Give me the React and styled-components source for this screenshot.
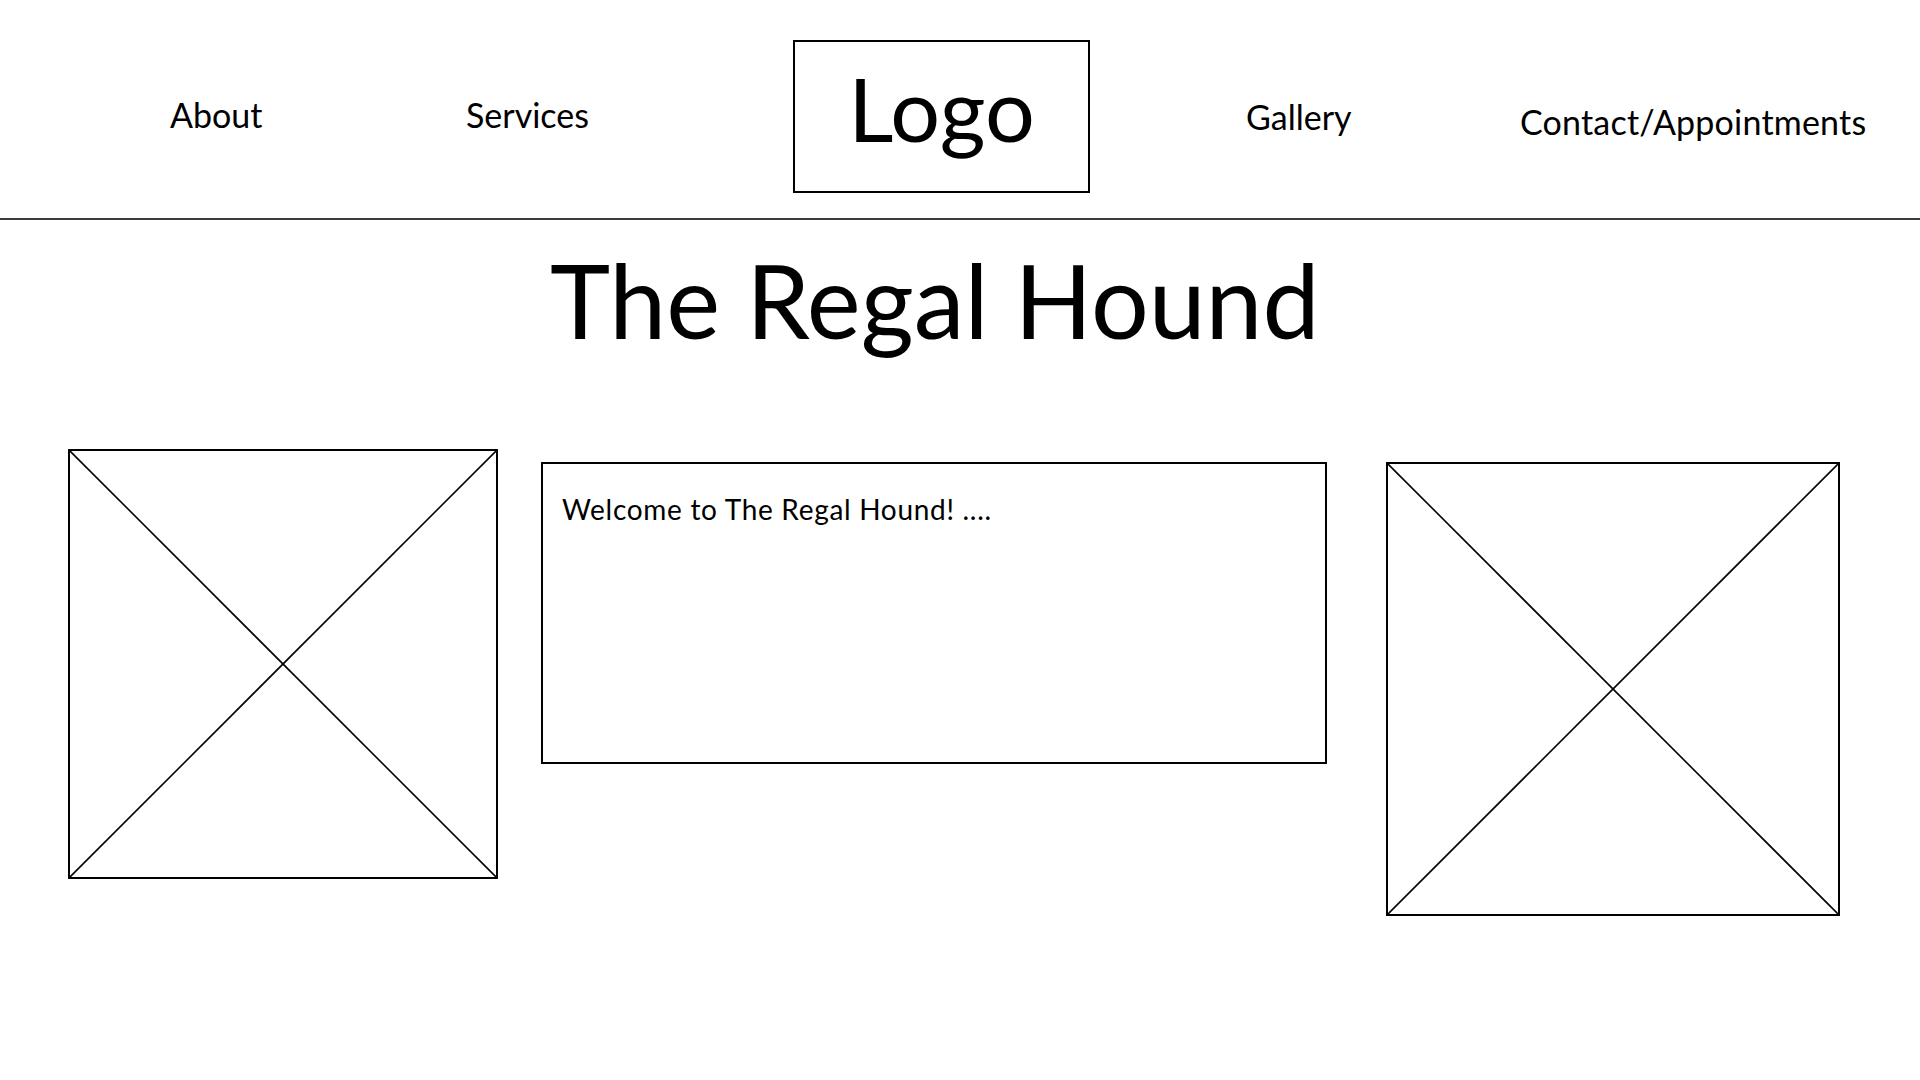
import React from 'react';
import styled, {createGlobalStyle} from 'styled-components';

const GlobalStyle = createGlobalStyle`
	html, body {
		margin: 0;
		padding: 0;
		background: #ffffff;
	}
	body {
		font-family: Lato, 'Open Sans', sans-serif;
		color: #000000;
	}
`;

const Page = styled.div`
	width: 1920px;
	min-height: 1080px;
	background: #ffffff;
`;

const Header = styled.header`
	display: grid;
	grid-template-columns: 296px 325px 455px 274px auto;
	align-items: start;
	height: 218px;
	padding-left: 170px;
	border-bottom: 2px solid #3c3c3c;
`;

const NavLink = styled.a`
	display: block;
	margin-top: ${({$top}) => $top}px;
	font-size: 34px;
	letter-spacing: ${({$spacing}) => $spacing || 0}px;
	line-height: 1;
	color: #000000;
	text-decoration: none;
	white-space: nowrap;
`;

const LogoBox = styled.div`
	display: flex;
	justify-content: center;
	align-items: flex-start;
	box-sizing: border-box;
	width: 297px;
	height: 153px;
	margin-top: 40px;
	margin-left: 2px;
	padding-top: 22px;
	border: 2px solid #000000;
	font-size: 88px;
	line-height: 1;
`;

const Title = styled.h1`
	margin: 29px 0 0 550px;
	font-size: 102px;
	font-weight: 400;
	line-height: 1;
	white-space: nowrap;
`;

const ContentRow = styled.section`
	display: flex;
	align-items: flex-start;
	margin-top: 98px;
	padding-left: 68px;
`;

const ImageSlot = styled.div`
	box-sizing: border-box;
	flex: none;
	width: ${({$size}) => $size}px;
	height: ${({$size}) => $size}px;
	margin-top: ${({$top}) => $top || 0}px;
	margin-left: ${({$left}) => $left || 0}px;
	border: 2px solid #000000;

	svg {
		display: block;
		width: 100%;
		height: 100%;
	}
`;

const TextPanel = styled.div`
	box-sizing: border-box;
	flex: none;
	width: 786px;
	height: 302px;
	margin-top: 13px;
	margin-left: 43px;
	padding: 31px 0 0 19px;
	border: 2px solid #000000;
	font-size: 28px;
	letter-spacing: 0.7px;
	line-height: 1;
`;

const Placeholder = ({size, top, left}) => (
	<ImageSlot $size={size} $top={top} $left={left}>
		<svg viewBox="0 0 100 100" preserveAspectRatio="none">
			<line x1="0" y1="0" x2="100" y2="100" stroke="#000" strokeWidth="1.6" vectorEffect="non-scaling-stroke" />
			<line x1="100" y1="0" x2="0" y2="100" stroke="#000" strokeWidth="1.6" vectorEffect="non-scaling-stroke" />
		</svg>
	</ImageSlot>
);

const App = () => {
	return (
		<Page>
			<GlobalStyle />
			<Header>
				<NavLink $top={98}>About</NavLink>
				<NavLink $top={98}>Services</NavLink>
				<LogoBox>Logo</LogoBox>
				<NavLink $top={100}>Gallery</NavLink>
				<NavLink $top={105} $spacing={0.2}>Contact/Appointments</NavLink>
			</Header>
			<Title>The Regal Hound</Title>
			<ContentRow>
				<Placeholder size={430} />
				<TextPanel>Welcome to The Regal Hound! ....</TextPanel>
				<Placeholder size={454} top={13} left={59} />
			</ContentRow>
		</Page>
	);
};

export default App;
